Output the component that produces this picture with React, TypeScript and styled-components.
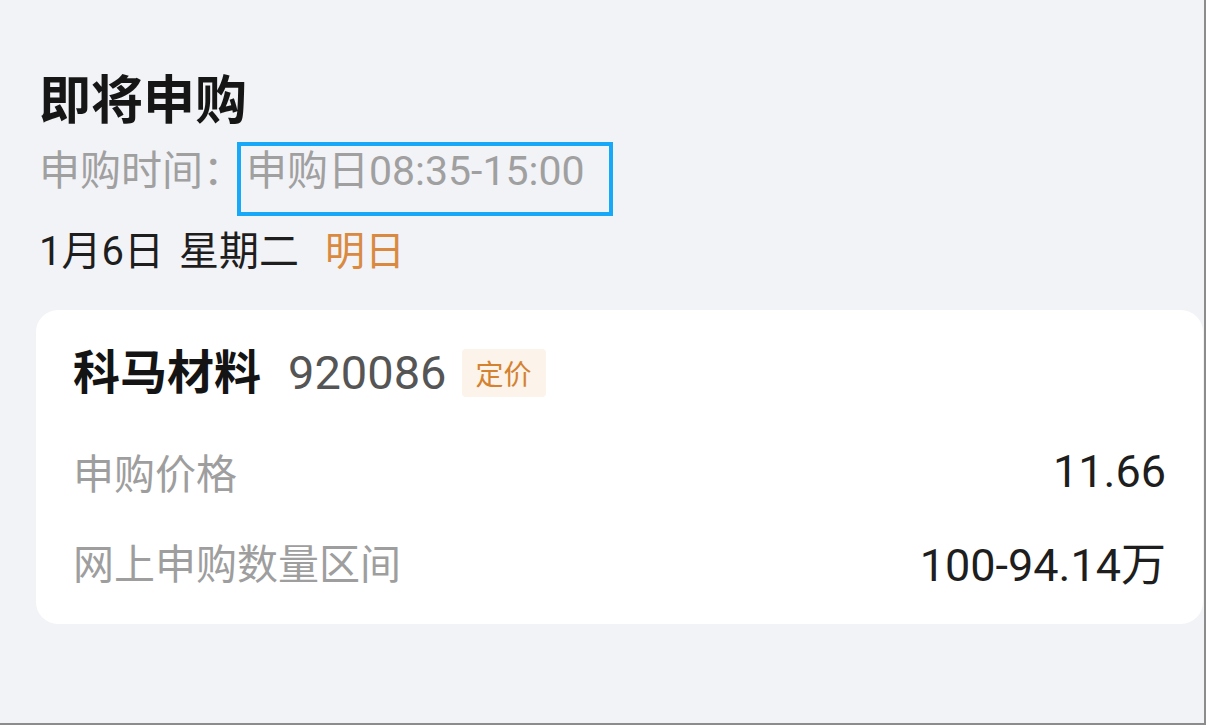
import React from "react";
import styled, { createGlobalStyle } from "styled-components";

const Global = createGlobalStyle`
  html, body { margin: 0; padding: 0; background: #f2f3f7; }
  *, *::before, *::after { box-sizing: border-box; }
`;

const FONT = `Roboto, "Noto Sans CJK SC", "Noto Sans", sans-serif`;

const Frame = styled.div`
  width: 1206px;
  height: 725px;
  background: #f2f3f7;
  border-right: 2px solid #8c8c8c;
  border-bottom: 2px solid #8c8c8c;
  padding: 72px 1px 0 36px;
  font-family: ${FONT};
  overflow: hidden;
`;

const Header = styled.div`
  padding-left: 3px;
  display: flex;
  flex-direction: column;
`;

const Title = styled.h1`
  margin: 0;
  font-size: 52px;
  line-height: 60px;
  font-weight: 700;
  color: #161616;
`;

const SubRow = styled.div`
  margin-top: 15px;
  display: flex;
  font-size: 41px;
  line-height: 48px;
  color: #a0a0a0;
`;

const Highlighted = styled.span`
  position: relative;
  margin-left: 2px;
  &::after {
    content: "";
    position: absolute;
    left: -9px;
    top: -5px;
    width: 376px;
    height: 74px;
    border: 4px solid #17a9f7;
  }
`;

const DateRow = styled.div`
  margin-top: 33px;
  font-size: 40px;
  line-height: 48px;
  color: #1e1e1e;
  display: flex;
`;

const Gap = styled.span<{ $gap: number; $accent?: boolean }>`
  margin-left: ${(p) => p.$gap}px;
  color: ${(p) => (p.$accent ? "#d98a40" : "inherit")};
`;

const Card = styled.div`
  margin-top: 34px;
  background: #ffffff;
  border-radius: 22px;
  padding: 35px 37px 38px 37px;
  display: flex;
  flex-direction: column;
`;

const NameRow = styled.div`
  display: flex;
  align-items: center;
  height: 56px;
`;

const Name = styled.span`
  font-size: 47px;
  font-weight: 700;
  color: #141414;
  line-height: 56px;
`;

const Code = styled.span`
  margin-left: 27px;
  font-size: 47px;
  color: #555555;
  line-height: 56px;
`;

const Badge = styled.span`
  margin-left: 15px;
  height: 48px;
  padding: 0 14px;
  display: inline-flex;
  align-items: center;
  background: #fcf3ea;
  color: #d4822f;
  border-radius: 4px;
  font-size: 28px;
`;

const InfoRow = styled.div<{ $top: number }>`
  margin-top: ${(p) => p.$top}px;
  display: flex;
  justify-content: space-between;
  align-items: center;
  height: 50px;
`;

const Label = styled.span`
  font-size: 41px;
  color: #9e9e9e;
`;

const Value = styled.span`
  font-size: 45px;
  color: #1e1e1e;
`;

export default function App() {
  return (
    <>
      <Global />
      <Frame>
        <Header>
          <Title>即将申购</Title>
          <SubRow>
            <span>申购时间：</span>
            <Highlighted>申购日08:35-15:00</Highlighted>
          </SubRow>
          <DateRow>
            <span>1月6日</span>
            <Gap $gap={15}>星期二</Gap>
            <Gap $gap={26} $accent>
              明日
            </Gap>
          </DateRow>
        </Header>
        <Card>
          <NameRow>
            <Name>科马材料</Name>
            <Code>920086</Code>
            <Badge>定价</Badge>
          </NameRow>
          <InfoRow $top={45}>
            <Label>申购价格</Label>
            <Value>11.66</Value>
          </InfoRow>
          <InfoRow $top={40}>
            <Label>网上申购数量区间</Label>
            <Value>100-94.14万</Value>
          </InfoRow>
        </Card>
      </Frame>
    </>
  );
}
